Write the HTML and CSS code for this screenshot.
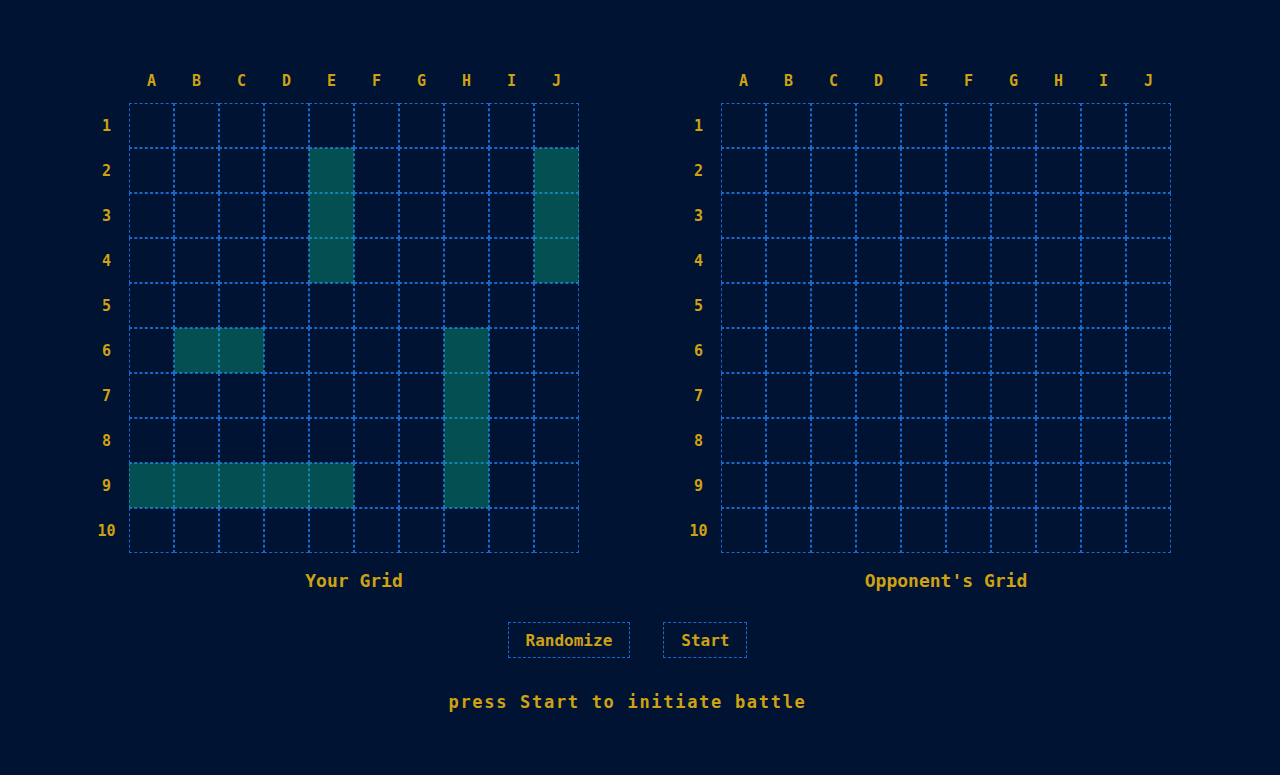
FILE: index.html
```html
<!DOCTYPE html>
<html lang="en">
<head>
    <meta charset="UTF-8">
    <meta name="viewport" content="width=device-width, initial-scale=1.0">
    <title>Battleship</title>
    <link rel="stylesheet" href="styles.css">
</head>

<body>
    <div class="page">
        <div class="boards">
            <div class="board">
                <div id="player-grid" class="grid"></div>
                <h2 class="board-title">Your Grid</h2>
            </div>
            <div class="board">
                <div id="opponent-grid" class="grid"></div>
                <h2 class="board-title">Opponent's Grid</h2>
            </div>
        </div>

        <div class="controls">
            <button class="btn">Randomize</button>
            <button class="btn">Start</button>
        </div>

        <p class="status">press Start to initiate battle</p>
    </div>

    <script>
        const letters = ["A", "B", "C", "D", "E", "F", "G", "H", "I", "J"];

        // ships on the player's grid, as [row, col]
        const ships = [
            [1, 4], [2, 4], [3, 4],
            [1, 9], [2, 9], [3, 9],
            [5, 1], [5, 2],
            [5, 7], [6, 7], [7, 7], [8, 7],
            [8, 0], [8, 1], [8, 2], [8, 3], [8, 4]
        ];

        function buildGrid(id, showShips) {
            const grid = document.getElementById(id);
            grid.appendChild(document.createElement("div"));

            letters.forEach(letter => {
                const label = document.createElement("div");
                label.className = "label";
                label.textContent = letter;
                grid.appendChild(label);
            });

            for (let r = 0; r < 10; r++) {
                const rowLabel = document.createElement("div");
                rowLabel.className = "label";
                rowLabel.textContent = r + 1;
                grid.appendChild(rowLabel);

                for (let c = 0; c < 10; c++) {
                    const cell = document.createElement("div");
                    cell.className = "cell";
                    if (showShips && ships.some(s => s[0] === r && s[1] === c)) {
                        cell.classList.add("ship");
                    }
                    grid.appendChild(cell);
                }
            }
        }

        buildGrid("player-grid", true);
        buildGrid("opponent-grid", false);
    </script>
</body>
</html>
```

FILE: styles.css
```css
body {
    margin: 0;
    padding: 0;
    background-color: #001332;
    font-family: 'DejaVu Sans Mono', 'Liberation Mono', monospace;
    font-weight: bold;
    color: #cfa213;
}

.page {
    display: flex;
    flex-direction: column;
    align-items: center;
    padding: 58px 25px 0 0;
}

.boards {
    display: flex;
    gap: 97px;
}

.board {
    display: flex;
    flex-direction: column;
    align-items: flex-end;
}

.grid {
    display: grid;
    grid-template-columns: repeat(11, 45px);
    grid-template-rows: repeat(11, 45px);
}

.label {
    display: flex;
    align-items: center;
    justify-content: center;
    font-size: 15px;
}

.cell {
    box-sizing: border-box;
    border: 1px dashed #1868cc;
    position: relative;
}

.cell.ship::after {
    content: "";
    position: absolute;
    inset: -1px;
    background-color: rgba(10, 171, 129, 0.4);
}

.board-title {
    width: 450px;
    text-align: center;
    margin: 17px 0 0;
    font-size: 18px;
    line-height: 22px;
    font-weight: bold;
}

.controls {
    display: flex;
    gap: 33px;
    margin-top: 30px;
}

.btn {
    height: 36px;
    padding: 0 17px;
    background: transparent;
    border: 1px dashed #1868cc;
    color: #cfa213;
    font-family: inherit;
    font-weight: bold;
    font-size: 16px;
    cursor: pointer;
}

.status {
    margin: 33px 0 0;
    font-size: 17px;
    line-height: 22px;
    letter-spacing: 1.7px;
}
```
